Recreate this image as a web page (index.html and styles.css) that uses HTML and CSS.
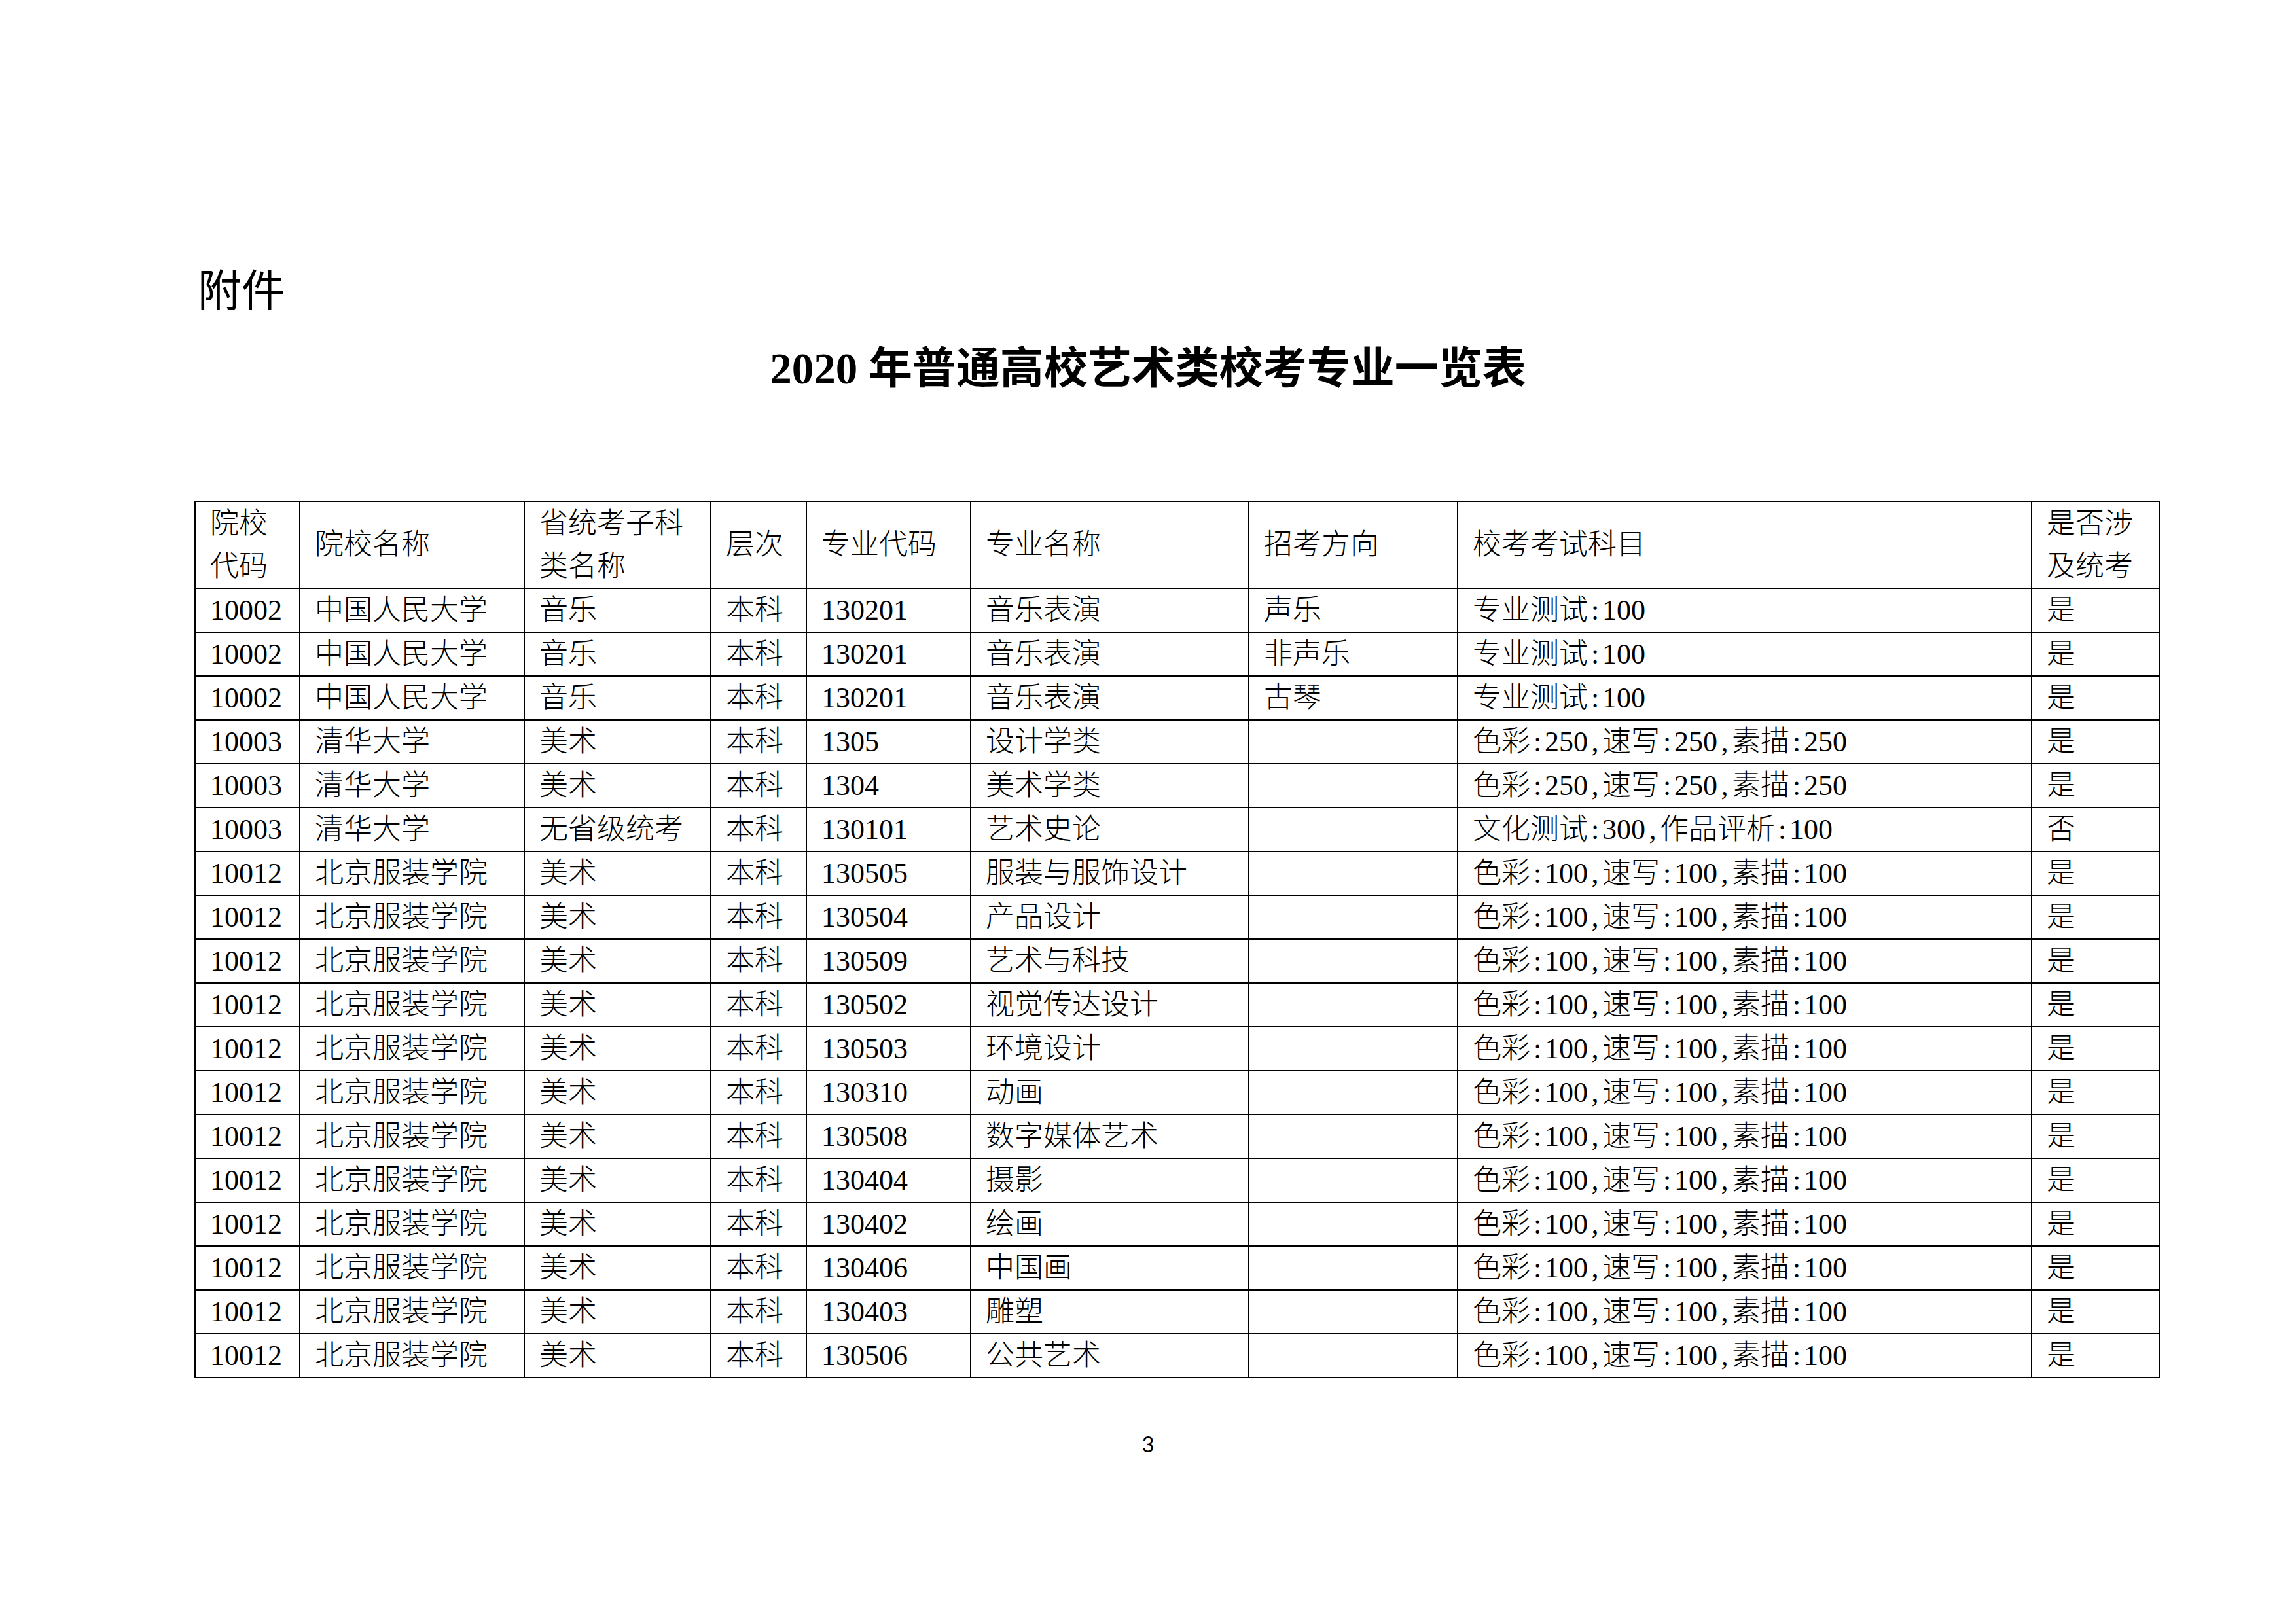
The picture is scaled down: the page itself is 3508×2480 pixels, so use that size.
FILE: index.html
```html
<!DOCTYPE html>
<html lang="zh-CN">
<head>
<meta charset="utf-8">
<title>2020年普通高校艺术类校考专业一览表</title>
<link rel="stylesheet" href="styles.css">
</head>
<body>
<div class="page">
  <div class="fujian">附件</div>
  <h1 class="title">2020 年普通高校艺术类校考专业一览表</h1>
  <table class="grid">
    <colgroup>
      <col class="c1"><col class="c2"><col class="c3"><col class="c4"><col class="c5"><col class="c6"><col class="c7"><col class="c8"><col class="c9">
    </colgroup>
    <thead>
      <tr>
        <th>院校<br>代码</th>
        <th>院校名称</th>
        <th>省统考子科<br>类名称</th>
        <th>层次</th>
        <th>专业代码</th>
        <th>专业名称</th>
        <th>招考方向</th>
        <th>校考考试科目</th>
        <th>是否涉<br>及统考</th>
      </tr>
    </thead>
    <tbody>
      <tr><td>10002</td><td>中国人民大学</td><td>音乐</td><td>本科</td><td>130201</td><td>音乐表演</td><td>声乐</td><td>专业测试<span class="pu">:</span>100</td><td>是</td></tr>
      <tr><td>10002</td><td>中国人民大学</td><td>音乐</td><td>本科</td><td>130201</td><td>音乐表演</td><td>非声乐</td><td>专业测试<span class="pu">:</span>100</td><td>是</td></tr>
      <tr><td>10002</td><td>中国人民大学</td><td>音乐</td><td>本科</td><td>130201</td><td>音乐表演</td><td>古琴</td><td>专业测试<span class="pu">:</span>100</td><td>是</td></tr>
      <tr><td>10003</td><td>清华大学</td><td>美术</td><td>本科</td><td>1305</td><td>设计学类</td><td></td><td>色彩<span class="pu">:</span>250<span class="pu">,</span>速写<span class="pu">:</span>250<span class="pu">,</span>素描<span class="pu">:</span>250</td><td>是</td></tr>
      <tr><td>10003</td><td>清华大学</td><td>美术</td><td>本科</td><td>1304</td><td>美术学类</td><td></td><td>色彩<span class="pu">:</span>250<span class="pu">,</span>速写<span class="pu">:</span>250<span class="pu">,</span>素描<span class="pu">:</span>250</td><td>是</td></tr>
      <tr><td>10003</td><td>清华大学</td><td>无省级统考</td><td>本科</td><td>130101</td><td>艺术史论</td><td></td><td>文化测试<span class="pu">:</span>300<span class="pu">,</span>作品评析<span class="pu">:</span>100</td><td>否</td></tr>
      <tr><td>10012</td><td>北京服装学院</td><td>美术</td><td>本科</td><td>130505</td><td>服装与服饰设计</td><td></td><td>色彩<span class="pu">:</span>100<span class="pu">,</span>速写<span class="pu">:</span>100<span class="pu">,</span>素描<span class="pu">:</span>100</td><td>是</td></tr>
      <tr><td>10012</td><td>北京服装学院</td><td>美术</td><td>本科</td><td>130504</td><td>产品设计</td><td></td><td>色彩<span class="pu">:</span>100<span class="pu">,</span>速写<span class="pu">:</span>100<span class="pu">,</span>素描<span class="pu">:</span>100</td><td>是</td></tr>
      <tr><td>10012</td><td>北京服装学院</td><td>美术</td><td>本科</td><td>130509</td><td>艺术与科技</td><td></td><td>色彩<span class="pu">:</span>100<span class="pu">,</span>速写<span class="pu">:</span>100<span class="pu">,</span>素描<span class="pu">:</span>100</td><td>是</td></tr>
      <tr><td>10012</td><td>北京服装学院</td><td>美术</td><td>本科</td><td>130502</td><td>视觉传达设计</td><td></td><td>色彩<span class="pu">:</span>100<span class="pu">,</span>速写<span class="pu">:</span>100<span class="pu">,</span>素描<span class="pu">:</span>100</td><td>是</td></tr>
      <tr><td>10012</td><td>北京服装学院</td><td>美术</td><td>本科</td><td>130503</td><td>环境设计</td><td></td><td>色彩<span class="pu">:</span>100<span class="pu">,</span>速写<span class="pu">:</span>100<span class="pu">,</span>素描<span class="pu">:</span>100</td><td>是</td></tr>
      <tr><td>10012</td><td>北京服装学院</td><td>美术</td><td>本科</td><td>130310</td><td>动画</td><td></td><td>色彩<span class="pu">:</span>100<span class="pu">,</span>速写<span class="pu">:</span>100<span class="pu">,</span>素描<span class="pu">:</span>100</td><td>是</td></tr>
      <tr><td>10012</td><td>北京服装学院</td><td>美术</td><td>本科</td><td>130508</td><td>数字媒体艺术</td><td></td><td>色彩<span class="pu">:</span>100<span class="pu">,</span>速写<span class="pu">:</span>100<span class="pu">,</span>素描<span class="pu">:</span>100</td><td>是</td></tr>
      <tr><td>10012</td><td>北京服装学院</td><td>美术</td><td>本科</td><td>130404</td><td>摄影</td><td></td><td>色彩<span class="pu">:</span>100<span class="pu">,</span>速写<span class="pu">:</span>100<span class="pu">,</span>素描<span class="pu">:</span>100</td><td>是</td></tr>
      <tr><td>10012</td><td>北京服装学院</td><td>美术</td><td>本科</td><td>130402</td><td>绘画</td><td></td><td>色彩<span class="pu">:</span>100<span class="pu">,</span>速写<span class="pu">:</span>100<span class="pu">,</span>素描<span class="pu">:</span>100</td><td>是</td></tr>
      <tr><td>10012</td><td>北京服装学院</td><td>美术</td><td>本科</td><td>130406</td><td>中国画</td><td></td><td>色彩<span class="pu">:</span>100<span class="pu">,</span>速写<span class="pu">:</span>100<span class="pu">,</span>素描<span class="pu">:</span>100</td><td>是</td></tr>
      <tr><td>10012</td><td>北京服装学院</td><td>美术</td><td>本科</td><td>130403</td><td>雕塑</td><td></td><td>色彩<span class="pu">:</span>100<span class="pu">,</span>速写<span class="pu">:</span>100<span class="pu">,</span>素描<span class="pu">:</span>100</td><td>是</td></tr>
      <tr><td>10012</td><td>北京服装学院</td><td>美术</td><td>本科</td><td>130506</td><td>公共艺术</td><td></td><td>色彩<span class="pu">:</span>100<span class="pu">,</span>速写<span class="pu">:</span>100<span class="pu">,</span>素描<span class="pu">:</span>100</td><td>是</td></tr>
    </tbody>
  </table>
  <div class="pageno">3</div>
</div>
</body>
</html>
```

FILE: styles.css
```css
html, body {
  margin: 0;
  padding: 0;
  background: #ffffff;
}

.page {
  width: 3508px;
  height: 2480px;
  position: relative;
  color: #000;
  overflow: hidden;
}

.fujian {
  margin: 405px 0 0 302px;
  font-family: "Noto Sans CJK SC", sans-serif;
  font-size: 67px;
  line-height: 67px;
  height: 67px;
}

.title {
  margin: 58px 0 0 0;
  text-align: center;
  font-family: "Liberation Serif", "Noto Sans CJK SC", serif;
  font-weight: 700;
  font-size: 67px;
  line-height: 67px;
  height: 67px;
}

.grid {
  margin: 168px 0 0 297px;
  width: 3001px;
  table-layout: fixed;
  border-collapse: collapse;
  border: 2px solid #000;
  font-family: "Liberation Serif", "Noto Sans CJK SC", serif;
  font-size: 44px;
  font-weight: 300;
}

.c1 { width: 160px; }
.c2 { width: 343px; }
.c3 { width: 285px; }
.c4 { width: 146px; }
.c5 { width: 251px; }
.c6 { width: 425px; }
.c7 { width: 319px; }
.c8 { width: 877px; }
.c9 { width: 195px; }

.grid th,
.grid td {
  border: 2px solid #000;
  padding: 0 0 0 22px;
  text-align: left;
  vertical-align: middle;
  white-space: nowrap;
  font-weight: 300;
}

.grid th {
  height: 131px;
  line-height: 65px;
}

.grid td {
  height: 65px;
  line-height: 48px;
}

.pu {
  display: inline-block;
  width: 22px;
  text-align: center;
}

.pageno {
  margin-top: 80px;
  text-align: center;
  font-family: Lato, "Liberation Sans", sans-serif;
  font-size: 33px;
  line-height: 40px;
}
```
